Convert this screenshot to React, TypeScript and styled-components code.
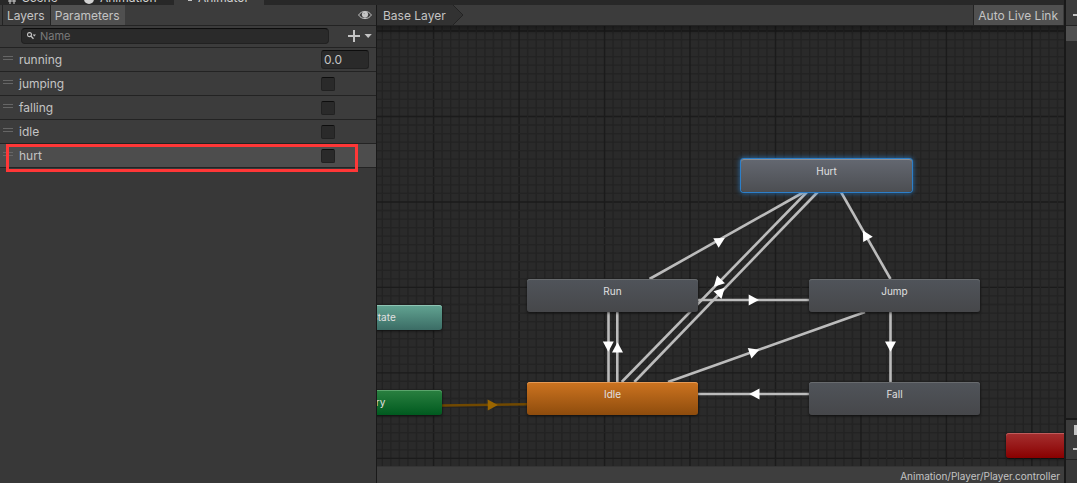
import React, { useState } from "react";
import styled, { createGlobalStyle } from "styled-components";

const GlobalStyle = createGlobalStyle`
  *, *::before, *::after { box-sizing: border-box; }
  html, body { margin: 0; padding: 0; height: 100%; background: #383838; overflow: hidden; }
  #root { height: 100%; }
  body, button, input { font-family: Inter, Roboto, sans-serif; font-size: 12px; color: #c4c4c4; }
  button, input { margin: 0; padding: 0; border: 0; border-radius: 0; background: none; }
`;

const Window = styled.div`
  display: flex;
  height: 100%;
  background: #191919;
`;

const Editor = styled.div`
  flex: 1;
  min-width: 0;
  display: flex;
  flex-direction: column;
`;

const TabStrip = styled.nav`
  display: flex;
  align-items: flex-end;
  height: 5px;
  flex: none;
  overflow: hidden;
  background: #282828;
`;

const WindowTab = styled.button<{ $active?: boolean; $width: number }>`
  display: flex;
  align-items: flex-end;
  gap: 6px;
  flex: none;
  width: ${(p) => p.$width}px;
  height: 20px;
  padding-left: 8px;
  line-height: 14px;
  white-space: nowrap;
  color: #d2d2d2;
  background: ${(p) => (p.$active ? "#3c3c3c" : "#282828")};
  svg { margin-bottom: 1px; }
`;

const Body = styled.div`
  flex: 1;
  min-height: 0;
  display: flex;
  gap: 1px;
`;

const Sidebar = styled.aside`
  width: 376px;
  flex: none;
  background: #383838;
`;

const Toolbar = styled.div`
  display: flex;
  align-items: center;
  height: 21px;
  flex: none;
  background: #3c3c3c;
  border-bottom: 1px solid #232323;
`;

const SidebarToolbar = styled(Toolbar)`
  padding: 0 4px 0 2px;
`;

const ToolTab = styled.button<{ $active?: boolean }>`
  height: 20px;
  padding: 0 5px 0 4px;
  border-left: 1px solid #232323;
  background: ${(p) => (p.$active ? "#505050" : "transparent")};
  &:last-of-type { border-right: 1px solid #232323; }
`;

const Spacer = styled.span`
  flex: 1;
`;

const SearchBar = styled(Toolbar)`
  height: 22px;
  align-items: flex-start;
  padding: 2px 4px 0 21px;
`;

const SearchField = styled.label`
  display: flex;
  align-items: center;
  gap: 4px;
  flex: 1;
  height: 16px;
  margin-right: 19px;
  padding-left: 5px;
  background: #2a2a2a;
  border: 1px solid #212121;
  border-top-color: #0d0d0d;
  border-radius: 4px;
`;

const SearchInput = styled.input`
  flex: 1;
  min-width: 0;
  height: 14px;
  font-size: 11px;
  outline: none;
  &::placeholder { color: #7b7b7b; opacity: 1; }
`;

const AddButton = styled.button`
  display: flex;
  align-items: center;
  height: 16px;
`;

const ParameterList = styled.ul`
  margin: 0;
  padding: 0;
  list-style: none;
`;

const ParameterRow = styled.li<{ $selected?: boolean }>`
  position: relative;
  display: flex;
  align-items: center;
  height: 24px;
  padding: 0 7px 0 3px;
  border-bottom: 1px solid #232323;
  background: ${(p) => (p.$selected ? "#4d4d4d" : "#3c3c3c")};
`;

const Handle = styled.span`
  width: 10px;
  height: 4px;
  margin: 0 6px 4px 0;
  border: solid #666;
  border-width: 1px 0;
`;

const ParameterName = styled.label`
  flex: 1;
  line-height: 16px;
`;

const ValueCell = styled.span`
  display: flex;
  width: 48px;
`;

const NumberField = styled.input`
  width: 48px;
  height: 19px;
  padding: 0 2px;
  background: #2a2a2a;
  border: 1px solid #212121;
  border-top-color: #0d0d0d;
  border-radius: 3px;
`;

const Toggle = styled.input`
  appearance: none;
  width: 14px;
  height: 14px;
  background: #2a2a2a;
  border: 1px solid #212121;
  border-top-color: #0d0d0d;
  border-radius: 2px;
  &:checked { background: #9a9a9a; }
`;

const Highlight = styled.span`
  position: absolute;
  z-index: 1;
  top: 0;
  left: 6px;
  right: 18px;
  height: 28px;
  border: 3px solid #ff3737;
  pointer-events: none;
`;

const GraphPanel = styled.main`
  flex: 1;
  min-width: 0;
  display: flex;
  flex-direction: column;
`;

const Crumb = styled.button`
  display: flex;
  align-items: center;
  height: 20px;
  padding-left: 6px;
  background: #323232;
`;

const CrumbTip = styled.svg`
  display: block;
  margin-left: 7px;
  background: #3c3c3c;
`;

const LiveLink = styled.button`
  height: 20px;
  padding: 0 5px 0 4px;
  margin-right: 1px;
  background: #505050;
  border-left: 1px solid #232323;
`;

const Canvas = styled.div`
  position: relative;
  flex: 1;
  min-height: 0;
  overflow: hidden;
  background: #2a2a2a;
`;

const Drawing = styled.svg`
  position: absolute;
  inset: 0;
  width: 100%;
  height: 100%;
`;

const tones = {
  gray: ["#50545a", "#46474a", "#686b6e"],
  selected: ["#646871", "#4c4e52", "#8d8f93"],
  orange: ["#cd7420", "#8e4c0d", "#e59a55"],
  teal: ["#62a492", "#3b6c65", "#8fc4b4"],
  green: ["#2a8040", "#005a1f", "#5aa56c"],
  red: ["#a53030", "#890000", "#c05c5c"],
};

const Node = styled.button<{ $x: number; $y: number; $w: number; $h: number; $tone: keyof typeof tones }>`
  position: absolute;
  left: ${(p) => p.$x}px;
  top: ${(p) => p.$y}px;
  width: ${(p) => p.$w}px;
  height: ${(p) => p.$h}px;
  display: flex;
  justify-content: center;
  align-items: flex-start;
  padding-top: 4px;
  font-size: 10px;
  line-height: 16px;
  color: #e0e0e0;
  border-radius: 3px;
  background: linear-gradient(${(p) => tones[p.$tone][0]}, ${(p) => tones[p.$tone][1]});
  box-shadow: inset 0 1px 0 ${(p) => tones[p.$tone][2]},
    ${(p) => (p.$tone === "selected" ? "0 0 0 1px #2c7fc9, 0 0 4px 2px #2c7fc999" : "0 1px 3px rgba(0, 0, 0, 0.6)")};
`;

const StatusBar = styled.footer`
  height: 17px;
  flex: none;
  padding-right: 4px;
  background: #3e3e3e;
  border-top: 1px solid #353535;
  font-size: 10px;
  line-height: 19px;
  text-align: right;
`;

const Dock = styled.aside`
  display: flex;
  flex-direction: column;
  width: 11px;
  margin-left: 2px;
  flex: none;
  overflow: hidden;
  background: #2d2d2d;
`;

const DockHead = styled.div`
  display: flex;
  align-items: flex-end;
  justify-content: flex-end;
  height: 26px;
  padding-bottom: 9px;
  background: #3c3c3c;
  border-bottom: 1px solid #232323;
`;

const DockItem = styled.div`
  height: 15px;
  background: #505050;
`;

const DockFoot = styled.div`
  height: 65px;
  margin-top: auto;
  background: #383838;
  border-top: 2px solid #191919;
`;

const DockTools = styled.div`
  display: flex;
  flex-direction: column;
  align-items: flex-end;
  gap: 13px;
  height: 40px;
  padding-top: 5px;
  background: #3c3c3c;
  border-bottom: 1px solid #232323;
`;

const Mark = styled.span<{ $w: number; $h: number }>`
  width: ${(p) => p.$w}px;
  height: ${(p) => p.$h}px;
  background: #c4c4c4;
`;

const STEP = 8.547;

function Grid() {
  const lines = [];
  for (let i = -6; i < 240; i++) {
    const major = i % 10 === 0;
    const x = 56.6 + i * STEP;
    const y = 5 + i * STEP;
    lines.push(
      <path
        key={i}
        d={`M${x} 0V2000M0 ${y}H2400`}
        stroke={major ? "#1b1b1b" : "#232323"}
        strokeWidth={major ? 1.4 : 1.3}
      />
    );
  }
  return <g fill="none">{lines}</g>;
}

// Each transition: start x, y, end x, y, then the arrow head's centre.
const transitions = [
  [649.5, 279, 804, 192, 720.3, 240.5],
  [807, 192, 621.7, 382, 717.5, 283],
  [634.3, 382, 817.7, 192, 721, 291.5],
  [668, 382, 865, 312, 754.3, 351.6],
  [698, 300, 809, 300, 753.7, 300],
  [809, 394, 698, 394, 754.5, 394],
  [890.5, 312, 890.5, 382, 890.5, 346.5],
  [608.5, 312, 608.5, 382, 608.3, 346.5],
  [617.3, 382, 617.3, 312, 617.5, 347.5],
  [890.5, 279, 841, 192, 865.5, 235],
];

function Arrow({ t, line, head }: { t: number[]; line: string; head: string }) {
  const [x1, y1, x2, y2, cx, cy] = t;
  const angle = (Math.atan2(y2 - y1, x2 - x1) * 180) / Math.PI;
  return (
    <g>
      <line x1={x1} y1={y1} x2={x2} y2={y2} stroke={line} strokeWidth="2.6" />
      <path d="M-5-5.5L5.2 0L-5 5.5Z" fill={head} transform={`translate(${cx} ${cy}) rotate(${angle})`} />
    </g>
  );
}

const toggles = ["jumping", "falling", "idle", "hurt"];

export default function App() {
  const [query, setQuery] = useState("");
  const [speed, setSpeed] = useState("0.0");
  return (
    <>
      <GlobalStyle />
      <Window>
        <Editor>
          <TabStrip>
            <WindowTab $width={76}>
              <svg width="8" height="10" viewBox="0 0 8 10">
                <path d="M2 0V10M6 0V10M0 3H8M0 7H8" stroke="#d2d2d2" />
              </svg>
              Scene
            </WindowTab>
            <WindowTab $width={98}>
              <svg width="10" height="10" viewBox="0 0 10 10"><circle cx="5" cy="5" r="5" fill="#d2d2d2" /></svg>
              Animation
            </WindowTab>
            <WindowTab $width={90} $active>
              <svg width="10" height="10" viewBox="0 0 10 10"><path d="M0 2h4v3H0zM6 4h4v3H6z" fill="#c4c4c4" /></svg>
              Animator
            </WindowTab>
          </TabStrip>
          <Body>
            <Sidebar>
              <SidebarToolbar>
                <ToolTab>Layers</ToolTab>
                <ToolTab $active>Parameters</ToolTab>
                <Spacer />
                <button aria-label="Toggle panel visibility">
                  <svg width="14" height="10" viewBox="0 0 14 10">
                    <path d="M.6 5C3.6.2 10.4.2 13.4 5C10.4 9.8 3.6 9.8.6 5Z" fill="none" stroke="#c4c4c4" />
                    <circle cx="7" cy="4.6" r="3.1" fill="#c4c4c4" />
                    <circle cx="6.2" cy="3.6" r=".7" fill="#8a8a8a" />
                  </svg>
                </button>
              </SidebarToolbar>
              <SearchBar>
                <SearchField>
                  <svg width="9" height="8" viewBox="0 0 9 8">
                    <circle cx="2.5" cy="2.6" r="2" fill="none" stroke="#c4c4c4" strokeWidth="1.1" />
                    <path d="M3.8 4L6.5 6.8" stroke="#c4c4c4" strokeWidth="1.3" />
                    <path d="M5.6 2.6H9L7.3 4.5Z" fill="#c4c4c4" />
                  </svg>
                  <SearchInput
                    aria-label="Search parameters"
                    placeholder="Name"
                    value={query}
                    onChange={(e) => setQuery(e.target.value)}
                  />
                </SearchField>
                <AddButton aria-label="Add parameter">
                  <svg width="24" height="12" viewBox="0 0 24 12">
                    <path d="M0 6H12M6 0V12" stroke="#c4c4c4" strokeWidth="2" />
                    <path d="M16.5 4H23.8L20.2 8Z" fill="#c4c4c4" />
                  </svg>
                </AddButton>
              </SearchBar>
              <ParameterList>
                <ParameterRow>
                  <Handle />
                  <ParameterName htmlFor="running">running</ParameterName>
                  <ValueCell>
                    <NumberField id="running" value={speed} onChange={(e) => setSpeed(e.target.value)} />
                  </ValueCell>
                </ParameterRow>
                {toggles.map((name) => (
                  <ParameterRow key={name} $selected={name === "hurt"}>
                    <Handle />
                    <ParameterName htmlFor={name}>{name}</ParameterName>
                    <ValueCell>
                      <Toggle id={name} type="checkbox" />
                    </ValueCell>
                    {name === "hurt" && <Highlight />}
                  </ParameterRow>
                ))}
              </ParameterList>
            </Sidebar>
            <GraphPanel>
              <Toolbar>
                <Crumb>
                  Base Layer
                  <CrumbTip width="11" height="20" viewBox="0 0 11 20">
                    <path d="M0 0L10 10L0 20Z" fill="#323232" />
                    <path d="M0 0L10 10L0 20" fill="none" stroke="#232323" />
                  </CrumbTip>
                </Crumb>
                <Spacer />
                <LiveLink>Auto Live Link</LiveLink>
              </Toolbar>
              <Canvas>
                <Drawing aria-hidden="true">
                  <defs>
                    <linearGradient id="topShade" x2="0" y2="1">
                      <stop offset="0" stopColor="#000" stopOpacity=".35" />
                      <stop offset="1" stopColor="#000" stopOpacity="0" />
                    </linearGradient>
                  </defs>
                  <Grid />
                  <rect width="100%" height="9" fill="url(#topShade)" />
                  <g transform="translate(-377 -26)">
                    {transitions.map((t, i) => (
                      <Arrow key={i} t={t} line="#bcbcbc" head="#ffffff" />
                    ))}
                    <Arrow t={[442, 405.5, 527, 404.3, 492.7, 405]} line="#714900" head="#9a6500" />
                  </g>
                </Drawing>
                <Node $x={364} $y={133} $w={171} $h={33} $tone="selected">Hurt</Node>
                <Node $x={150} $y={253} $w={171} $h={33} $tone="gray">Run</Node>
                <Node $x={432} $y={253} $w={171} $h={33} $tone="gray">Jump</Node>
                <Node $x={150} $y={356} $w={171} $h={33} $tone="orange">Idle</Node>
                <Node $x={432} $y={356} $w={171} $h={33} $tone="gray">Fall</Node>
                <Node $x={-73} $y={279} $w={138} $h={25} $tone="teal">Any State</Node>
                <Node $x={-73} $y={364} $w={138} $h={25} $tone="green">Entry</Node>
                <Node $x={629} $y={407} $w={138} $h={25} $tone="red" aria-label="Exit" />
              </Canvas>
              <StatusBar>Animation/Player/Player.controller</StatusBar>
            </GraphPanel>
          </Body>
        </Editor>
        <Dock>
          <DockHead><Mark $w={4} $h={2} /></DockHead>
          <DockItem />
          <DockFoot>
            <DockTools>
              <Mark $w={3} $h={10} />
              <Mark $w={4} $h={2} />
            </DockTools>
          </DockFoot>
        </Dock>
      </Window>
    </>
  );
}
